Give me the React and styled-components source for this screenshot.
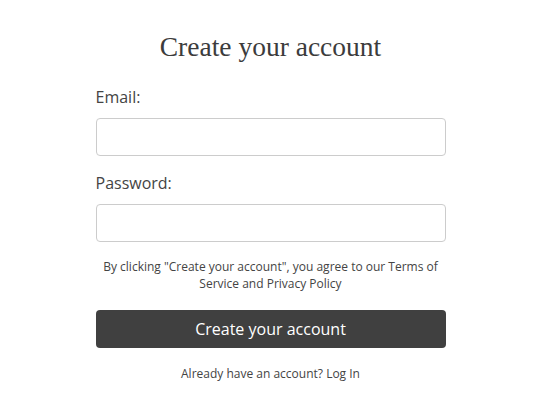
import styled, { createGlobalStyle } from "styled-components";

const Global = createGlobalStyle`
  body {
    margin: 0;
    background: #fff;
    font-family: "Open Sans", "Liberation Sans", sans-serif;
    color: #444;
  }
`;

const Page = styled.div`
  display: flex;
  justify-content: center;
  padding: 30px 4px 0 0;
`;

const Form = styled.form`
  width: 350px;
  display: flex;
  flex-direction: column;
`;

const Title = styled.h1`
  margin: 0 0 22px;
  text-align: center;
  font-family: "Liberation Serif", "DejaVu Serif", serif;
  font-weight: normal;
  font-size: 27.5px;
  color: #3c3c3c;
  line-height: 34px;
`;

const Label = styled.label`
  font-size: 16px;
  line-height: 22px;
  color: #444;
  margin-bottom: 10px;
`;

const Input = styled.input`
  box-sizing: border-box;
  height: 38px;
  border: 1px solid #ccc;
  border-radius: 4px;
  margin-bottom: ${(p) => p.$gap || 16}px;
  padding: 0 10px;
  font-size: 14px;
`;

const Terms = styled.p`
  margin: 0 0 18px;
  text-align: center;
  font-size: 12px;
  line-height: 17px;
  color: #444;
`;

const Button = styled.button`
  height: 38px;
  border: none;
  border-radius: 4px;
  background: #404040;
  color: #fff;
  font-family: "Open Sans", "Liberation Sans", sans-serif;
  font-size: 16px;
  cursor: pointer;
`;

const Footer = styled.p`
  margin: 17px 0 0;
  text-align: center;
  font-size: 12px;
  color: #444;
`;

export default function App() {
  return (
    <Page>
      <Global />
      <Form onSubmit={(e) => e.preventDefault()}>
        <Title>Create your account</Title>
        <Label>Email:</Label>
        <Input type="email" />
        <Label>Password:</Label>
        <Input type="password" $gap={16} />
        <Terms>
          By clicking "Create your account", you agree to our Terms of Service and Privacy Policy
        </Terms>
        <Button type="submit">Create your account</Button>
        <Footer>Already have an account? Log In</Footer>
      </Form>
    </Page>
  );
}
